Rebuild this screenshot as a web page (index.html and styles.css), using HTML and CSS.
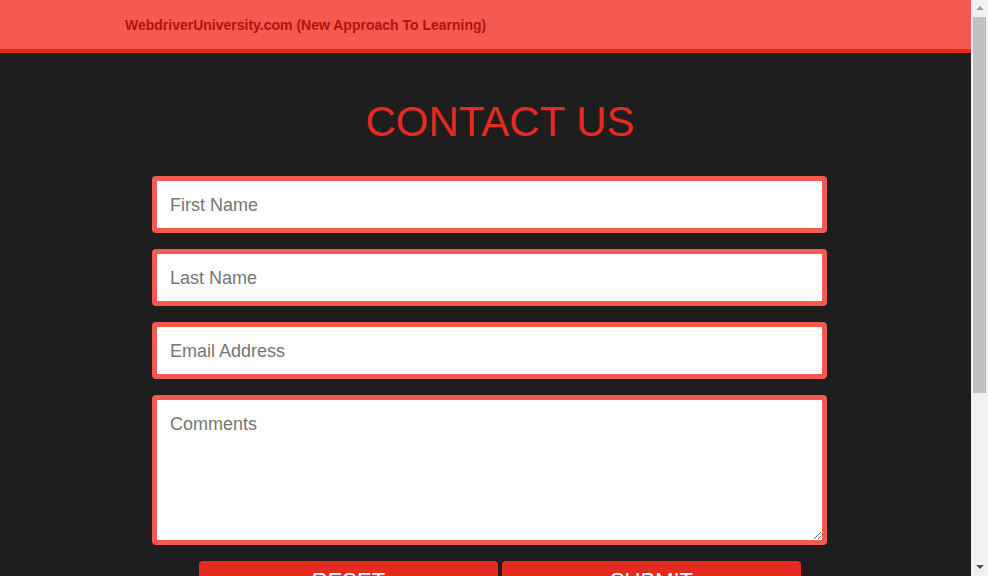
FILE: index.html
```html
<!DOCTYPE html>
<html lang="en">
<head>
<meta charset="utf-8">
<title>WebDriver | Contact Us</title>
<link rel="stylesheet" href="styles.css">
</head>
<body>
<div class="viewport">
  <header class="topbar">
    <span class="brand">WebdriverUniversity.com (New Approach To Learning)</span>
  </header>
  <main class="page">
    <h2 class="title">CONTACT US</h2>
    <form class="contact-form">
      <input class="field" type="text" placeholder="First Name">
      <input class="field" type="text" placeholder="Last Name">
      <input class="field" type="text" placeholder="Email Address">
      <textarea class="field comments" placeholder="Comments"></textarea>
      <div class="actions">
        <button class="btn" type="reset">RESET</button>
        <button class="btn" type="button">SUBMIT</button>
      </div>
    </form>
  </main>
</div>
<div class="scrollbar" aria-hidden="true">
  <span class="arrow up"></span>
  <span class="thumb"></span>
  <span class="track"></span>
  <span class="arrow down"></span>
</div>
</body>
</html>
```
FILE: styles.css
```css
html, body {
  margin: 0;
  padding: 0;
}
body {
  background: #1e1e1e;
  font-family: "Liberation Sans", Arial, sans-serif;
  overflow-x: hidden;
}
.viewport {
  width: 971px;
}
.topbar {
  height: 49px;
  background: #f45a50;
  border-bottom: 4px solid #e8291f;
  display: flex;
  align-items: center;
  padding-left: 125px;
}
.brand {
  color: #b5120c;
  font-weight: bold;
  font-size: 14px;
  padding-top: 1px;
}
.page {
  padding-top: 46px;
  padding-bottom: 220px;
}
.title {
  margin: 0;
  font-weight: normal;
  font-size: 42px;
  line-height: 46px;
  color: #e8291f;
  text-align: center;
  padding-left: 29px;
}
.contact-form {
  width: 675px;
  margin: 31px 0 0 152px;
  display: flex;
  flex-direction: column;
  gap: 16px;
}
.field {
  box-sizing: border-box;
  width: 675px;
  height: 57px;
  border: 5px solid #f45a50;
  border-radius: 4px;
  background: #fff;
  font-family: "Liberation Sans", Arial, sans-serif;
  font-size: 18px;
  padding: 2px 13px 0;
  color: #333;
  outline: none;
  margin: 0;
}
.field::placeholder {
  color: #757575;
}
.comments {
  height: 150px;
  padding-top: 14px;
  resize: vertical;
  display: block;
}
.actions {
  display: flex;
  gap: 4px;
  margin-left: 47px;
}
.btn {
  display: block;
  width: 299px;
  border: none;
  border-radius: 4px;
  background: #e62a20;
  color: #fff;
  font-family: "Liberation Sans", Arial, sans-serif;
  font-size: 22px;
  line-height: 25px;
  padding: 7px 0 10px;
  cursor: pointer;
}
.scrollbar {
  position: fixed;
  top: 0;
  right: 0;
  width: 17px;
  height: 100vh;
  background: #f1f1f1;
  display: flex;
  flex-direction: column;
  align-items: center;
}
.arrow {
  width: 0;
  height: 0;
  border-left: 4px solid transparent;
  border-right: 4px solid transparent;
  flex: none;
}
.arrow.up {
  border-bottom: 4px solid #a3a3a3;
  margin: 6px 0 7px;
}
.arrow.down {
  border-top: 4px solid #505050;
  margin: 0 0 7px;
}
.thumb {
  width: 13px;
  height: 376px;
  background: #c1c1c1;
  flex: none;
}
.track {
  flex: 1;
}
```
